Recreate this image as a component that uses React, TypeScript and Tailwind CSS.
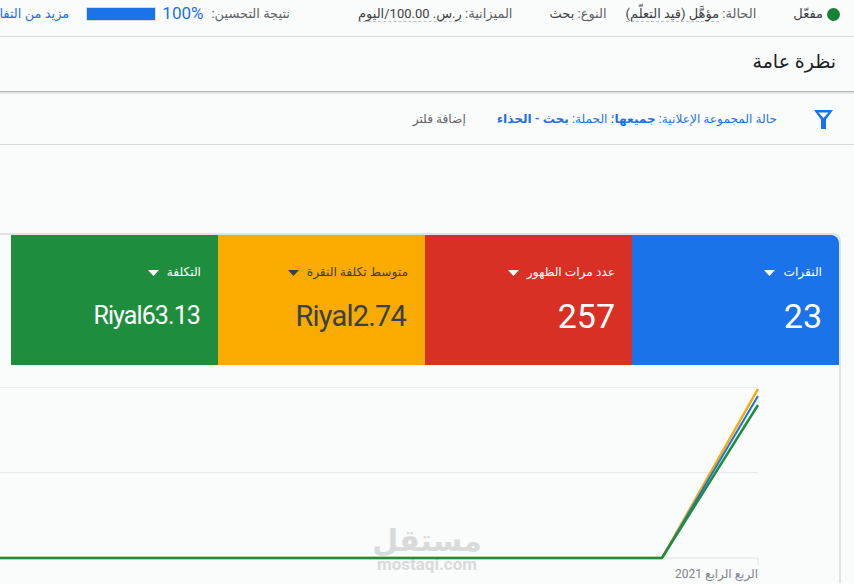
const arabic = "font-['Roboto','DejaVu_Sans',sans-serif]";

function Caret({ className }: { className: string }) {
	return (
		<svg width="11" height="6" viewBox="0 0 11 6" className={className}>
			<path d="M0 0h11L5.5 6z" fill="currentColor" />
		</svg>
	);
}

const tiles = [
	{ label: "النقرات", value: "23", bg: "bg-[#1a73e8]", text: "text-white", big: "text-[34px]" },
	{ label: "عدد مرات الظهور", value: "257", bg: "bg-[#d93025]", text: "text-white", big: "text-[34px]" },
	{ label: "متوسط تكلفة النقرة", value: "Riyal2.74", bg: "bg-[#f9ab00]", text: "text-[#3c4043]", big: "mr-[2px] text-[29px] tracking-[-0.8px]" },
	{ label: "التكلفة", value: "Riyal63.13", bg: "bg-[#1e8e3e]", text: "text-white", big: "mr-[1px] text-[25px] tracking-[-0.9px]" },
];

function Tile({ label, value, bg, text, big }: (typeof tiles)[number]) {
	return (
		<div className={`flex h-[130px] w-[207px] flex-col pr-[17px] pt-[29px] ${bg} ${text}`}>
			<div className="flex h-4 items-center gap-2 text-[12.2px] leading-4">
				<span>{label}</span>
				<Caret className="mt-0.5" />
			</div>
			<div className={`mt-[16px] h-10 leading-10 ${big}`} dir="ltr">
				<span className="block text-right">{value}</span>
			</div>
		</div>
	);
}

function Chart() {
	return (
		<svg width="839" height="218" viewBox="0 366 839 218" className="relative z-10 block" dir="ltr">
			<g stroke="#e8eaed" fill="none">
				<path d="M0 388.5H758" />
				<path d="M0 473.5H758" />
				<path d="M0 559H758V566" strokeWidth="1.5" />
			</g>
			<g fill="none" strokeWidth="2.5">
				<path d="M0 559H662L758 390" stroke="#f9ab00" />
				<path d="M662 559L758 397" stroke="#1a73e8" strokeWidth="2" />
				<path d="M0 559H662L758 406" stroke="#1e8e3e" />
			</g>
			<text x="758" y="579" textAnchor="start" fontSize="12" fill="#80868b" direction="rtl">
				الربع الرابع 2021
			</text>
		</svg>
	);
}

export default function App() {
	return (
		<div dir="rtl" className={`relative h-[584px] w-[854px] overflow-hidden bg-[#fafbfb] text-[#3c4043] ${arabic}`}>
			<div className="flex h-[37px] items-center overflow-hidden whitespace-nowrap border-b border-[#dadce0] pb-2 pr-[14px] text-[13px]">
				<span className="ml-[37px] flex items-center gap-1">
					<span className="h-[13px] w-[13px] rounded-full bg-[#188038]" />
					مفعّل
				</span>
				<span className="ml-[19px]">
					<span className="text-[#5f6368]">الحالة: </span>
					<span className="border-b border-dashed border-[#bdc1c6]">مؤهَّل (قيد التعلّم)</span>
				</span>
				<span className="ml-[37px]">
					<span className="text-[#5f6368]">النوع: </span>بحث
				</span>
				<span className="ml-[68px]">
					<span className="text-[#5f6368]">الميزانية: </span>
					<span className="border-b border-dashed border-[#bdc1c6]">ر.س. 100.00/اليوم</span>
				</span>
				<span className="ml-[8px] text-[#5f6368]">نتيجة التحسين:</span>
				<span className="ml-[6px] text-[17px] text-[#1a73e8]">100%</span>
				<span className="ml-[17px] h-[14px] w-[70px] shrink-0 border border-[#dadce0] bg-[#1a73e8]" />
				<span className="text-[#1a73e8]">مزيد من التفاصيل</span>
			</div>

			<div className="flex h-[55px] items-center border-b border-[#b5b7b7] pb-1 pr-[18px] text-[19px] text-[#202124]">نظرة عامة</div>

			<div className="flex h-[53px] items-center border-b border-t-2 border-[#dadce0] border-t-[#e4e6e6] pr-[21px] text-[12.2px]">
				<svg width="19" height="19" viewBox="0 0 19 19" className="shrink-0">
					<path fillRule="evenodd" fill="#1a73e8" d="M0 0H19L12 9.5V19H7V9.5ZM4.5 2.5L9.5 8L14.5 2.5Z" />
				</svg>
				<span className="mr-[37px] text-[#1a73e8]">
					حالة المجموعة الإعلانية: <b>جميعها</b>؛ الحملة: <b>بحث - الحذاء</b>
				</span>
				<span className="mr-[31px] text-[#5f6368]">إضافة فلتر</span>
			</div>

			<div className="mr-[13px] mt-[88px] rounded-tr-lg border-r-2 border-t-2 border-[#e0e2e3]">
				<div className="flex overflow-hidden rounded-tr-lg">
					{tiles.map((tile) => (
						<Tile key={tile.label} {...tile} />
					))}
				</div>
				<Chart />
			</div>

			<div className="pointer-events-none absolute left-[375px] top-[525px] flex w-[104px] flex-col items-center font-bold text-[#d9dada]">
				<span className="text-[30px] leading-[32px]">مستقل</span>
				<span className="text-[17px] leading-[14px]" dir="ltr">mostaqi.com</span>
			</div>
		</div>
	);
}
